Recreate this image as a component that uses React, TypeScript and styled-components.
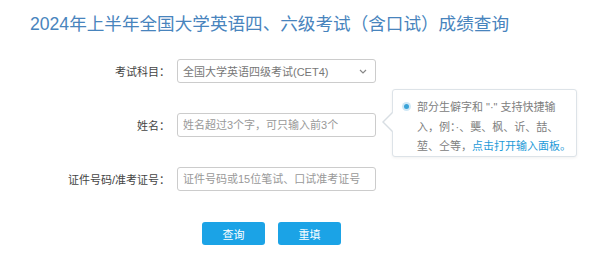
import React from "react";
import styled, { createGlobalStyle } from "styled-components";

const GlobalStyle = createGlobalStyle`
  html, body {
    margin: 0;
    padding: 0;
    background: #fff;
  }
  body {
    font-family: "Liberation Sans", "Noto Sans CJK SC", sans-serif;
    color: #333;
  }
`;

const Page = styled.div`
  width: 600px;
  height: 259px;
  overflow: hidden;
`;

const Title = styled.h1`
  margin: 12px 0 0 30px;
  font-size: 17.6px;
  line-height: 24px;
  font-weight: 400;
  color: #4884bd;
`;

const Form = styled.form`
  display: grid;
  grid-template-columns: 170px 199px;
  column-gap: 7px;
  row-gap: 30px;
  margin-top: 23px;
  align-items: center;
`;

const Label = styled.label`
  font-size: 11px;
  color: #444;
  text-align: right;
  white-space: nowrap;
`;

const Field = styled.div`
  position: relative;
  height: 24px;
`;

const Input = styled.input`
  box-sizing: border-box;
  width: 100%;
  height: 24px;
  border: 1px solid #ccc;
  border-radius: 3px;
  padding: 0 5px;
  font-family: inherit;
  font-size: 11px;
  color: #555;
  outline: none;
  &::placeholder {
    color: #999;
  }
`;

const Select = styled.div`
  box-sizing: border-box;
  display: flex;
  align-items: center;
  justify-content: space-between;
  width: 100%;
  height: 24px;
  border: 1px solid #ccc;
  border-radius: 3px;
  padding: 0 8px 0 5px;
  font-size: 11px;
  color: #777;
`;

const Tip = styled.div`
  position: absolute;
  left: 215px;
  top: -24px;
  box-sizing: border-box;
  width: 185px;
  height: 68px;
  background: #fff;
  border: 1px solid #dde3e8;
  border-radius: 3px;
  box-shadow: 0 1px 3px rgba(0, 0, 0, 0.06);
  padding: 8px 6px 2px 9px;
  display: flex;
  gap: 6px;
  align-items: flex-start;

  &::before,
  &::after {
    content: "";
    position: absolute;
    top: 22px;
    border-style: solid;
    border-color: transparent;
  }
  &::before {
    left: -11px;
    border-width: 10px 10px 10px 0;
    border-right-color: #d8dee3;
  }
  &::after {
    left: -9px;
    border-width: 10px 10px 10px 0;
    border-right-color: #fff;
  }
`;

const Dot = styled.span`
  flex: none;
  margin-top: 6px;
  width: 5px;
  height: 5px;
  border-radius: 50%;
  background: #3aa3d8;
  box-shadow: 0 0 0 2px #cfe8f6;
  margin-left: 2px;
  margin-right: 2px;
`;

const TipText = styled.div`
  font-size: 11px;
  line-height: 19.5px;
  color: #808080;
  white-space: nowrap;
`;

const TipLink = styled.a`
  color: #1e9ad8;
  text-decoration: none;
`;

const Buttons = styled.div`
  grid-column: 2;
  display: flex;
  gap: 13px;
  padding-left: 25px;
  margin-top: 1px;
`;

const Button = styled.button`
  width: 63px;
  height: 23px;
  border: none;
  border-radius: 3px;
  background: #1ba3e6;
  color: #fff;
  font-family: inherit;
  font-size: 11px;
  padding: 0;
  cursor: pointer;
`;

const Chevron: React.FC = () => (
  <svg width="8" height="5" viewBox="0 0 8 5" aria-hidden="true">
    <path d="M1 1l3 3 3-3" fill="none" stroke="#888" strokeWidth="1.2" />
  </svg>
);

const App: React.FC = () => {
  return (
    <Page>
      <GlobalStyle />
      <Title>2024年上半年全国大学英语四、六级考试（含口试）成绩查询</Title>
      <Form onSubmit={(e) => e.preventDefault()}>
        <Label>考试科目：</Label>
        <Field>
          <Select>
            <span>全国大学英语四级考试(CET4)</span>
            <Chevron />
          </Select>
        </Field>

        <Label>姓名：</Label>
        <Field>
          <Input placeholder="姓名超过3个字，可只输入前3个" />
          <Tip>
            <Dot />
            <TipText>
              部分生僻字和 "·" 支持快捷输
              <br />
              入，例：·、龑、枫、䜣、喆、
              <br />
              堃、仝等，<TipLink href="#">点击打开输入面板。</TipLink>
            </TipText>
          </Tip>
        </Field>

        <Label>证件号码/准考证号：</Label>
        <Field>
          <Input placeholder="证件号码或15位笔试、口试准考证号" />
        </Field>

        <Buttons>
          <Button type="submit">查询</Button>
          <Button type="reset">重填</Button>
        </Buttons>
      </Form>
    </Page>
  );
};

export default App;
